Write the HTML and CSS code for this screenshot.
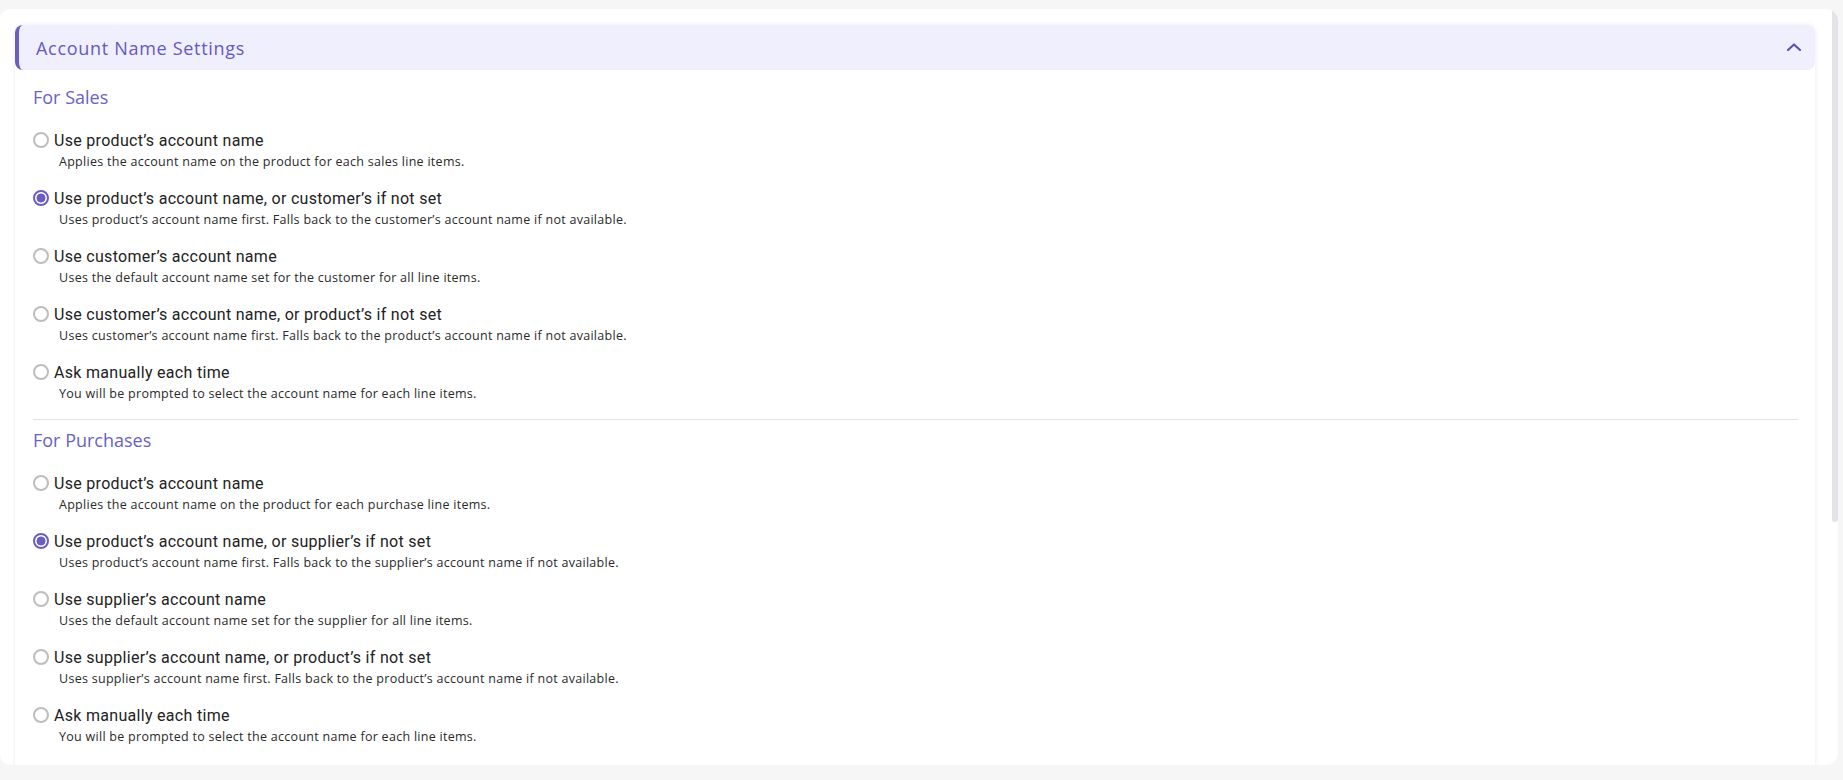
FILE: index.html
```html
<!DOCTYPE html>
<html lang="en">
<head>
<meta charset="utf-8">
<title>Account Name Settings</title>
<link rel="stylesheet" href="styles.css">
</head>
<body>
<div class="page">
  <div class="frame">
    <div class="content">
      <section class="card">
        <header class="card-header">
          <h2 class="card-title">Account Name Settings</h2>
          <svg class="chevron" width="14" height="8" viewBox="0 0 14 8" aria-hidden="true"><path d="M1 7 L7 1.5 L13 7" fill="none" stroke="#5b52b5" stroke-width="2.2" stroke-linecap="round" stroke-linejoin="round"/></svg>
        </header>
        <div class="card-body">
          <div class="group">
            <h3 class="group-title">For Sales</h3>
            <div class="options">
              <div class="option">
                <div class="option-row"><span class="radio"></span><span class="label">Use product’s account name</span></div>
                <p class="desc">Applies the account name on the product for each sales line items.</p>
              </div>
              <div class="option">
                <div class="option-row"><span class="radio checked"></span><span class="label">Use product’s account name, or customer’s if not set</span></div>
                <p class="desc">Uses product’s account name first. Falls back to the customer’s account name if not available.</p>
              </div>
              <div class="option">
                <div class="option-row"><span class="radio"></span><span class="label">Use customer’s account name</span></div>
                <p class="desc">Uses the default account name set for the customer for all line items.</p>
              </div>
              <div class="option">
                <div class="option-row"><span class="radio"></span><span class="label">Use customer’s account name, or product’s if not set</span></div>
                <p class="desc">Uses customer’s account name first. Falls back to the product’s account name if not available.</p>
              </div>
              <div class="option">
                <div class="option-row"><span class="radio"></span><span class="label">Ask manually each time</span></div>
                <p class="desc">You will be prompted to select the account name for each line items.</p>
              </div>
            </div>
          </div>
          <hr class="divider">
          <div class="group">
            <h3 class="group-title">For Purchases</h3>
            <div class="options">
              <div class="option">
                <div class="option-row"><span class="radio"></span><span class="label">Use product’s account name</span></div>
                <p class="desc">Applies the account name on the product for each purchase line items.</p>
              </div>
              <div class="option">
                <div class="option-row"><span class="radio checked"></span><span class="label">Use product’s account name, or supplier’s if not set</span></div>
                <p class="desc">Uses product’s account name first. Falls back to the supplier’s account name if not available.</p>
              </div>
              <div class="option">
                <div class="option-row"><span class="radio"></span><span class="label">Use supplier’s account name</span></div>
                <p class="desc">Uses the default account name set for the supplier for all line items.</p>
              </div>
              <div class="option">
                <div class="option-row"><span class="radio"></span><span class="label">Use supplier’s account name, or product’s if not set</span></div>
                <p class="desc">Uses supplier’s account name first. Falls back to the product’s account name if not available.</p>
              </div>
              <div class="option">
                <div class="option-row"><span class="radio"></span><span class="label">Ask manually each time</span></div>
                <p class="desc">You will be prompted to select the account name for each line items.</p>
              </div>
            </div>
          </div>
        </div>
      </section>
    </div>
    <div class="scrollbar"><div class="thumb"></div></div>
  </div>
</div>
</body>
</html>
```

FILE: styles.css
```css
html, body {
  margin: 0;
  padding: 0;
  background: #f6f6f6;
}
body {
  font-family: "Open Sans", "Liberation Sans", sans-serif;
  color: #222;
}
.page {
  height: 780px;
  padding: 9px 5px 0 0;
  box-sizing: border-box;
}
.frame {
  display: flex;
  height: 756px;
  background: #fff;
  border-radius: 10px 12px 12px 10px;
  overflow: hidden;
}
.content {
  flex: 1;
  padding: 16px 17px 0 15px;
  overflow: hidden;
}
.scrollbar {
  width: 6px;
  flex: none;
}
.thumb {
  height: 513px;
  background: #e3e3e8;
  border-radius: 3px;
}
.card {
  background: #fff;
  border-radius: 8px;
  box-shadow: 0 0 4px rgba(0, 0, 0, 0.09);
  min-height: 760px;
}
.card-header {
  display: flex;
  align-items: center;
  justify-content: space-between;
  height: 45px;
  box-sizing: border-box;
  background: #f0effd;
  border-left: 4px solid #6a5fc1;
  border-radius: 8px;
  padding: 0 14px 0 17px;
}
.card-title {
  margin: 0;
  font-size: 18px;
  font-weight: 500;
  color: #6459bf;
  letter-spacing: 0.7px;
}
.chevron {
  display: block;
  margin-top: -1px;
}
.card-body {
  padding: 14px 17px 0 18px;
}
.group-title {
  margin: 0;
  font-size: 18px;
  line-height: 26px;
  font-weight: 500;
  color: #6a5fc4;
}
.options {
  display: flex;
  flex-direction: column;
  gap: 18px;
  margin-top: 20px;
}
.option-row {
  display: flex;
  align-items: center;
  height: 20px;
}
.radio {
  width: 16px;
  height: 16px;
  box-sizing: border-box;
  border: 2px solid #bdbdbd;
  border-radius: 50%;
  flex: none;
  margin-right: 5px;
}
.radio.checked {
  border-color: #6a5fc1;
  background: radial-gradient(circle, #6a5fc1 0 4.2px, #fff 4.8px);
}
.label {
  font-family: Roboto, "Liberation Sans", sans-serif;
  font-size: 16px;
  color: #222;
  letter-spacing: 0.3px;
}
.desc {
  margin: 4px 0 0 26px;
  font-size: 12.5px;
  line-height: 16px;
  color: #2a2a2a;
  letter-spacing: 0.28px;
}
.divider {
  border: 0;
  border-top: 1px solid #e2e0e8;
  margin: 17px 0 7px 0;
}
```
